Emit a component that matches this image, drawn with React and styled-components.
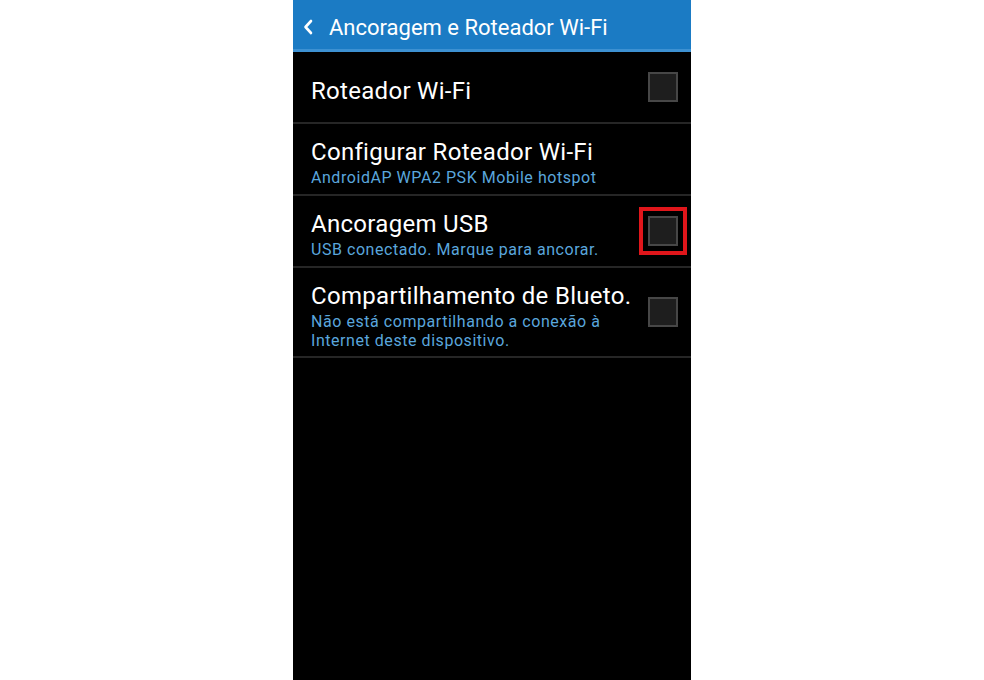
import React from 'react'
import styled, {createGlobalStyle} from 'styled-components'

const Global = createGlobalStyle`
  html, body {
    margin: 0;
    background: #fff;
  }
  body {
    font-family: Roboto, "Noto Sans", "Liberation Sans", sans-serif;
  }
`

const items = [
  {title: 'Roteador Wi-Fi'},
  {title: 'Configurar Roteador Wi-Fi', sub: ['AndroidAP WPA2 PSK Mobile hotspot'], noBox: true},
  {title: 'Ancoragem USB', sub: ['USB conectado. Marque para ancorar.'], marked: true},
  {title: 'Compartilhamento de Blueto.', sub: ['Não está compartilhando a conexão à', 'Internet deste dispositivo.'], tall: true},
]

const Screen = styled.div`
  width: 398px;
  height: 680px;
  margin: 0 auto;
  background: #000;
  display: flex;
  flex-direction: column;
`

const Bar = styled.div`
  box-sizing: border-box;
  height: 52px;
  padding: 5px 0 0 10px;
  background: #1b7bc4;
  border-bottom: 3px solid #3d91d2;
  display: flex;
  align-items: center;
  gap: 16px;
  color: #fff;
  font-size: 22px;
  letter-spacing: 0;
`

const Back = () => (
  <svg width="10" height="16" viewBox="0 0 10 16">
    <path d="M8 2 L2.5 8 L8 14" fill="none" stroke="#fff" strokeWidth="2.6" strokeLinecap="round" strokeLinejoin="round" />
  </svg>
)

const Row = styled.div`
  height: ${p => p.tall ? 88 : 70}px;
  border-bottom: 2px solid #262626;
  display: flex;
  align-items: center;
  padding: 0 13px 0 18px;
`

const Texts = styled.div`
  flex: 1;
  display: flex;
  flex-direction: column;
  padding-top: 7px;
`

const Title = styled.div`
  color: #fff;
  font-size: 24px;
  line-height: 28px;
  letter-spacing: 0.3px;
`

const Sub = styled.div`
  color: #5aa6dc;
  font-size: 16px;
  line-height: 19px;
  letter-spacing: 0.55px;
  margin-top: ${p => p.first ? 2 : 0}px;
`

const Check = styled.div`
  position: relative;
  width: 26px;
  height: 26px;
  background: #1e1e1e;
  border: 2px solid #474747;
  ${({marked}) => marked ? `
    &::after {
      content: '';
      position: absolute;
      inset: -11px;
      border: 4px solid #e0161b;
    }
  ` : ''}
`

export default function App() {
  return (
    <>
      <Global />
      <Screen>
        <Bar>
          <Back />
          Ancoragem e Roteador Wi-Fi
        </Bar>
        {items.map((it, i) => (
          <Row key={i} tall={it.tall}>
            <Texts>
              <Title>{it.title}</Title>
              {it.sub && it.sub.map((s, j) => <Sub key={j} first={j === 0}>{s}</Sub>)}
            </Texts>
            {!it.noBox && <Check marked={it.marked} />}
          </Row>
        ))}
      </Screen>
    </>
  )
}
